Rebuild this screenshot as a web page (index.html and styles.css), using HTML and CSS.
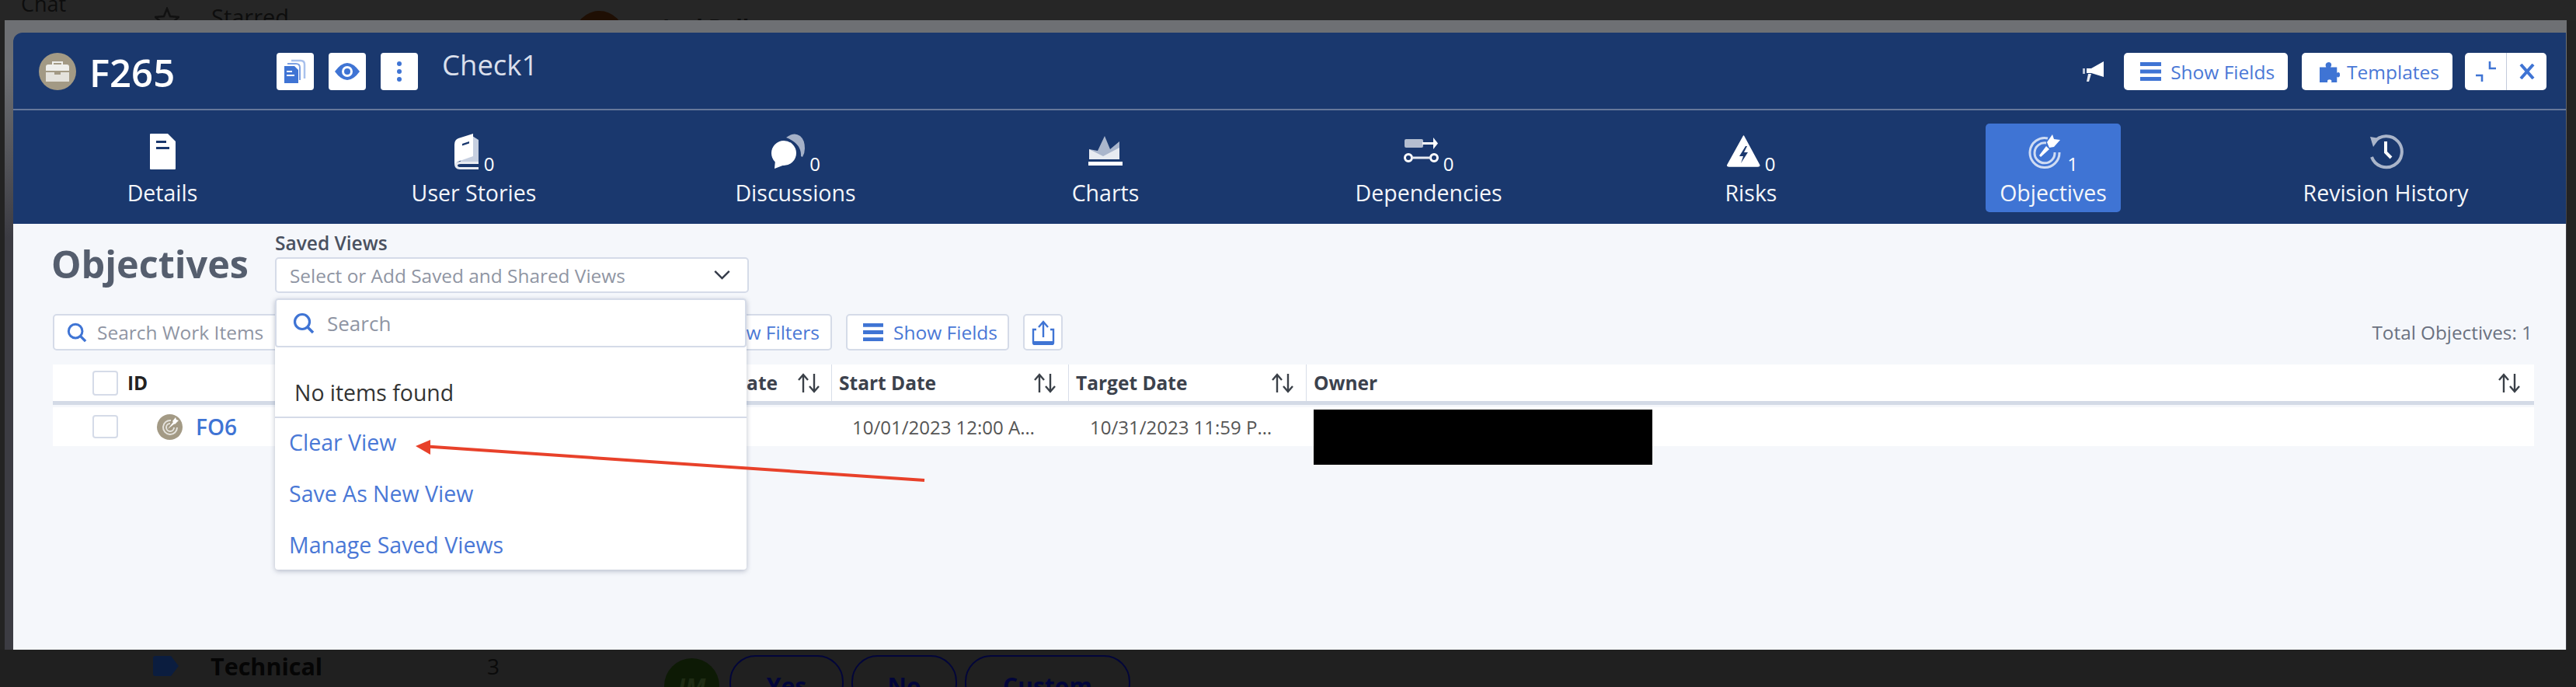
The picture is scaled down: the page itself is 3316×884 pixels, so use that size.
FILE: index.html
```html
<!DOCTYPE html>
<html lang="en">
<head>
    <meta charset="UTF-8">
    <title>F265 - Objectives</title>
    <link rel="stylesheet" href="styles.css">
</head>
<body>

<svg class="sprites" aria-hidden="true">
    <symbol id="sort" viewBox="0 0 30 26">
        <path d="M8 25V3M2 9l6-7 6 7M22 1v22M16 17l6 7 6-7" fill="none" stroke="currentColor" stroke-width="2.4"/>
    </symbol>
    <symbol id="search" viewBox="0 0 28 28">
        <circle cx="12" cy="12" r="9.5" fill="none" stroke="currentColor" stroke-width="3.2"/>
        <path d="M19 19l7 7" stroke="currentColor" stroke-width="3.6"/>
    </symbol>
    <symbol id="bars" viewBox="0 0 27 26">
        <path d="M0 1h27v5H0zM0 10.500h27v5H0zM0 20h27v5H0z" fill="currentColor"/>
    </symbol>
</svg>

<!-- page behind the modal, only its edges show -->
<div class="behind-top">
    <span class="bt-chat">Chat</span>
    <svg class="bt-star" viewBox="0 0 32 32"><path d="M16 2l4 10 11 1-8 7 2 11-9-6-9 6 2-11-8-7 11-1z" fill="none" stroke="#111" stroke-width="2.500"/></svg>
    <span class="bt-starred">Starred</span>
    <span class="bt-avatar"></span>
    <span class="bt-name">Joel Bell</span>
</div>

<div class="modal">
    <div class="card">

        <div class="header">
            <span class="avatar">
                <svg viewBox="0 0 48 48" width="48" height="48">
                    <path d="M18 15v-3h12v3" fill="none" stroke="#efefec" stroke-width="2"/>
                    <path d="M9 18q0-3 3-3h24q3 0 3 3v5H9z" fill="#efefec"/>
                    <path d="M9 25h11v3h8v-3h11v12H9z" fill="#e4e2dc"/>
                    <path d="M21 24h6v3h-6z" fill="#a39a85"/>
                </svg>
            </span>
            <span class="item-id">F265</span>
            <div class="icon-btns">
                <span class="icon-btn">
                    <svg viewBox="0 0 30 32" width="30" height="32">
                        <path d="M10 2h12q5 0 5 5v18" fill="none" stroke="#a9c1ec" stroke-width="2.500"/>
                        <path d="M5 6h11q5 0 5 5v16" fill="none" stroke="#7da1e3" stroke-width="2"/>
                        <path d="M1 9h13l5 5v17H1z" fill="#3f74d4"/>
                        <path d="M4 15h7v2H4zM4 20h10v2H4z" fill="#fff"/>
                    </svg>
                </span>
                <span class="icon-btn">
                    <svg viewBox="0 0 32 24" width="32" height="24">
                        <path d="M0 12Q8 1 16 1t16 11Q24 23 16 23T0 12z" fill="#3f74d4"/>
                        <circle cx="16" cy="12" r="7" fill="#fff"/>
                        <circle cx="16" cy="12" r="4" fill="#3f74d4"/>
                    </svg>
                </span>
                <span class="icon-btn">
                    <svg viewBox="0 0 8 28" width="8" height="28">
                        <circle cx="4" cy="4" r="3" fill="#3f74d4"/>
                        <circle cx="4" cy="14" r="3" fill="#3f74d4"/>
                        <circle cx="4" cy="24" r="3" fill="#3f74d4"/>
                    </svg>
                </span>
            </div>
            <span class="item-name">Check1</span>

            <div class="header-right">
                <svg class="horn" viewBox="0 0 29 26" width="29" height="26">
                    <path d="M27 0v20L11 15H5V9h6z" fill="#fff"/>
                    <path d="M0 9h3v7H0z" fill="#b9c3d6"/>
                    <path d="M7 16h4l-3 10H5z" fill="#e8ebf1"/>
                </svg>
                <span class="head-btn">
                    <svg class="ico-bars" width="27" height="26"><use href="#bars"/></svg>
                    Show Fields
                </span>
                <span class="head-btn">
                    <svg viewBox="0 0 28 36" width="26" height="34">
                        <path d="M0 12h9q-2-4 1-6 4-2 6 1 1 3-1 5h9v8q3-2 4 1 1 4-2 5-2 0-2-1v8h-8q2-3-2-4-4 0-3 4H0z" fill="#3f74d4"/>
                    </svg>
                    Templates
                </span>
                <div class="win-btns">
                    <span class="win-btn">
                        <svg viewBox="0 0 28 28" width="28" height="28">
                            <path d="M19 1v9h8M1 19h8v8" fill="none" stroke="#3f74d4" stroke-width="2.600"/>
                        </svg>
                    </span>
                    <span class="win-btn">
                        <svg viewBox="0 0 20 20" width="20" height="20">
                            <path d="M2 1l16 18M18 1L2 19" fill="none" stroke="#3f74d4" stroke-width="4"/>
                        </svg>
                    </span>
                </div>
            </div>
        </div>

        <div class="tabs">
            <div class="tab">
                <div class="tab-inner">
                    <div class="tab-icon">
                        <svg viewBox="0 0 33 46" width="33" height="46">
                            <path d="M1 0h22l10 10v35q0 1-1 1H1q-1 0-1-1V1q0-1 1-1z" fill="#fff"/>
                            <path d="M8 9h13v3H8zM8 17h17v3H8z" fill="#1a386e"/>
                        </svg>
                    </div>
                    <span class="tab-label">Details</span>
                </div>
            </div>
            <div class="tab">
                <div class="tab-inner">
                    <div class="tab-icon">
                        <svg viewBox="0 0 33 46" width="33" height="46">
                            <path d="M24 3l8 5v29H8z" fill="#c6cfe0"/>
                            <path d="M1 14q0-6 5-8L25 0v29L8 35q-7 2-7 7z" fill="#fff"/>
                            <path d="M1 38q0 8 7 8h24v-3H9q-4 0-4-2t4-2h23v-3H9q-6 0-8 2z" fill="#e8ebf1"/>
                            <path d="M11 13l9-3v2.500l-9 3z" fill="#1a386e"/>
                        </svg>
                    </div>
                    <span class="tab-count">0</span>
                    <span class="tab-label">User Stories</span>
                </div>
            </div>
            <div class="tab">
                <div class="tab-inner">
                    <div class="tab-icon">
                        <svg viewBox="0 0 44 46" width="44" height="46">
                            <path d="M20 5Q30-3 38 3q6 5 6 16 0 6-3 11l-2-1q1-16-19-24z" fill="#a5b1c8"/>
                            <circle cx="17" cy="25" r="16" fill="#fff"/>
                            <path d="M6 34l-1 11 13-5z" fill="#fff"/>
                        </svg>
                    </div>
                    <span class="tab-count">0</span>
                    <span class="tab-label">Discussions</span>
                </div>
            </div>
            <div class="tab">
                <div class="tab-inner">
                    <div class="tab-icon">
                        <svg viewBox="0 0 44 46" width="44" height="46">
                            <path d="M1 33V20l11 2 9-19 7 17 12-10v23z" fill="#aab6cc"/>
                            <path d="M1 20l18 9 21-11v15H1z" fill="#e8ebf1"/>
                            <path d="M0 36h44v5H0z" fill="#fff"/>
                        </svg>
                    </div>
                    <span class="tab-label">Charts</span>
                </div>
            </div>
            <div class="tab">
                <div class="tab-inner">
                    <div class="tab-icon">
                        <svg viewBox="0 0 45 46" width="45" height="46">
                            <rect x="1" y="7" width="24" height="11" rx="2" fill="#b4bed0"/>
                            <path d="M24 11h15v3H24z" fill="#fff"/>
                            <path d="M38 5l6 7.500-6 7.500z" fill="#fff"/>
                            <circle cx="6" cy="31" r="4.500" fill="none" stroke="#fff" stroke-width="3"/>
                            <circle cx="39" cy="31" r="4.500" fill="none" stroke="#fff" stroke-width="3"/>
                            <path d="M10 29.500h25v3H10z" fill="#e8ebf1"/>
                        </svg>
                    </div>
                    <span class="tab-count">0</span>
                    <span class="tab-label">Dependencies</span>
                </div>
            </div>
            <div class="tab">
                <div class="tab-inner">
                    <div class="tab-icon">
                        <svg viewBox="0 0 43 46" width="43" height="46">
                            <path d="M21.500 3l20 37q1 2-2 2H3q-3 0-2-2z" fill="#fff" stroke="#fff" stroke-width="1.500" stroke-linejoin="round"/>
                            <path d="M24 16l-8 13h5l-3 9 9-14h-5l4-8z" fill="#1a386e"/>
                        </svg>
                    </div>
                    <span class="tab-count">0</span>
                    <span class="tab-label">Risks</span>
                </div>
            </div>
            <div class="tab">
                <div class="tab-inner tab-active">
                    <div class="tab-icon">
                        <svg viewBox="0 0 44 46" width="44" height="46">
                            <g fill="none" stroke="#cfdcf3">
                                <path d="M25 6A19 19 0 1 0 40 24" stroke-width="3"/>
                                <path d="M23 12A13 13 0 1 0 34 24" stroke-width="3"/>
                            </g>
                            <path d="M14 28l9-12 4 4-11 10z" fill="#fff"/>
                            <path d="M24 11l7-10 2 6 8 1-8 9-6 1z" fill="#fff"/>
                        </svg>
                    </div>
                    <span class="tab-count">1</span>
                    <span class="tab-label">Objectives</span>
                </div>
            </div>
            <div class="tab">
                <div class="tab-inner">
                    <div class="tab-icon">
                        <svg viewBox="0 0 45 46" width="45" height="46">
                            <path d="M7 11A20 20 0 1 1 4 30" fill="none" stroke="#aab5ca" stroke-width="4"/>
                            <path d="M2 4l12 2-8 11z" fill="#aab5ca"/>
                            <path d="M22 10v14l7 7" fill="none" stroke="#fff" stroke-width="4"/>
                        </svg>
                    </div>
                    <span class="tab-label">Revision History</span>
                </div>
            </div>
        </div>

        <div class="panel">
            <div class="title-row">
                <h1 class="title">Objectives</h1>
                <div class="views">
                    <label class="views-label">Saved Views</label>
                    <div class="select">
                        <span>Select or Add Saved and Shared Views</span>
                        <svg viewBox="0 0 24 13" width="23" height="12">
                            <path d="M2 1l10 10L22 1" fill="none" stroke="#333a48" stroke-width="2.600"/>
                        </svg>
                    </div>
                    <div class="dropdown">
                        <div class="dd-search">
                            <svg class="ico-search" width="28" height="28"><use href="#search"/></svg>
                            <span>Search</span>
                        </div>
                        <div class="dd-empty">No items found</div>
                        <div class="dd-links">
                            <a class="dd-link">Clear View</a>
                            <a class="dd-link">Save As New View</a>
                            <a class="dd-link">Manage Saved Views</a>
                        </div>
                    </div>
                </div>
            </div>

            <div class="toolbar">
                <div class="search-box">
                    <svg class="ico-search" width="26" height="26"><use href="#search"/></svg>
                    <span>Search Work Items</span>
                </div>
                <span class="tool-btn filters-btn">Show Filters</span>
                <span class="tool-btn fields-btn">
                    <svg class="ico-bars" width="26" height="25"><use href="#bars"/></svg>
                    Show Fields
                </span>
                <span class="tool-btn share-btn">
                    <svg viewBox="0 0 30 32" width="30" height="32">
                        <path d="M6 12H2v17q0 2 2 2h22q2 0 2-2V12h-4" fill="none" stroke="#3f74d4" stroke-width="2.400"/>
                        <path d="M15 22V3M9 9l6-7 6 7" fill="none" stroke="#3f74d4" stroke-width="2.400"/>
                        <path d="M2 27h26v3H2z" fill="#3f74d4"/>
                    </svg>
                </span>
                <span class="total">Total Objectives: 1</span>
            </div>

            <div class="grid-head">
                <div class="th th-id">
                    <span class="check"></span>
                    <span>ID</span>
                </div>
                <div class="th th-hidden">
                    <span>Update Date</span>
                    <svg class="sort" width="30" height="26"><use href="#sort"/></svg>
                </div>
                <div class="th">
                    <span>Start Date</span>
                    <svg class="sort" width="30" height="26"><use href="#sort"/></svg>
                </div>
                <div class="th">
                    <span>Target Date</span>
                    <svg class="sort" width="30" height="26"><use href="#sort"/></svg>
                </div>
                <div class="th th-last">
                    <span>Owner</span>
                    <svg class="sort" width="30" height="26"><use href="#sort"/></svg>
                </div>
            </div>

            <div class="grid-row">
                <div class="td td-id">
                    <span class="check"></span>
                    <span class="row-icon">
                        <svg viewBox="0 0 33 33" width="33" height="33">
                            <g fill="none" stroke="#e4e2dc" stroke-width="2">
                                <path d="M18 8a9 9 0 1 0 8 9"/>
                                <path d="M17 12a5 5 0 1 0 5 5"/>
                            </g>
                            <path d="M14 19l7-9 2 2zM20 9l4-5 1 3 3 1-5 5z" fill="#fff"/>
                        </svg>
                    </span>
                    <a class="row-id">FO6</a>
                </div>
                <div class="td"></div>
                <div class="td td-date"><span>10/01/2023 12:00 AM</span></div>
                <div class="td td-date"><span>10/31/2023 11:59 PM</span></div>
                <div class="td td-owner"><span class="redact"></span></div>
            </div>

            <svg class="callout" viewBox="0 0 665 65" width="665" height="65">
                <path d="M20 15.500L660 59" stroke="#e8412a" stroke-width="4"/>
                <path d="M5 15L24 7v19z" fill="#e8412a"/>
            </svg>
        </div>

    </div>
</div>

<div class="behind-bottom">
    <svg class="bb-tag" viewBox="0 0 34 26"><path d="M3 0h20l10 13-10 13H3q-3 0-3-3V3q0-3 3-3z" fill="#0b1d3f"/></svg>
    <span class="bb-tech">Technical</span>
    <span class="bb-num">3</span>
    <span class="bb-circle">IM</span>
    <span class="bb-pill bb-yes">Yes</span>
    <span class="bb-pill bb-no">No</span>
    <span class="bb-pill bb-custom">Custom</span>
</div>

</body>
</html>
```

FILE: styles.css
```css
:root {
    --navy: #1a386e;
    --blue: #3f74d4;
    --link: #4a78d6;
    --line: #d5dbe8;
    --muted: #8f95a3;
    --panel: #f5f7fb;
}

* { margin: 0; padding: 0; box-sizing: border-box; }
body {
    width: 3316px;
    height: 884px;
    overflow: hidden;
    background: #232323;
    font-family: 'Open Sans', 'Noto Sans', sans-serif;
}

.sprites { display: none; }

/* --- page behind the modal --- */
.behind-top {
    height: 26px;
    display: flex;
    overflow: hidden;
    background: #262626;
    color: #0d0d0d;
}
.bt-chat { margin: -12px 0 0 27px; font-size: 27px; line-height: 34px; height: 34px; width: 172px; }
.bt-star { margin-top: 9px; width: 32px; height: 32px; flex: none; }
.bt-starred { margin: 2px 0 0 41px; font-size: 29px; line-height: 40px; height: 40px; width: 468px; }
.bt-avatar { margin-top: 14px; width: 63px; height: 63px; border-radius: 50%; background: #1f0f04; flex: none; }
.bt-name { margin: 15px 0 0 50px; font-size: 28px; font-weight: 700; line-height: 40px; height: 40px; }

.behind-bottom {
    height: 48px;
    display: flex;
    align-items: flex-start;
    overflow: hidden;
    background: #202020;
    color: #050505;
}
.bb-tag { margin: 8px 0 0 197px; width: 34px; height: 26px; flex: none; }
.bb-tech { margin: 0 0 0 40px; width: 356px; font-size: 30.500px; font-weight: 700; line-height: 42px; }
.bb-num { font-size: 28px; line-height: 42px; color: #0a0a0a; width: 228px; }
.bb-circle {
    margin-top: 11px;
    width: 71px;
    height: 71px;
    flex: none;
    border-radius: 50%;
    background: #0d1a05;
    color: #1f2c14;
    font-size: 30px;
    font-style: italic;
    font-weight: 700;
    text-align: center;
    line-height: 74px;
}
.bb-pill {
    height: 70px;
    margin-top: 7px;
    border: 2px solid #02053a;
    border-radius: 34px;
    color: #02053a;
    font-size: 30px;
    font-weight: 700;
    text-align: center;
    line-height: 76px;
}
.bb-yes { margin-left: 13px; width: 147px; }
.bb-no { margin-left: 10px; width: 136px; }
.bb-custom { margin-left: 10px; width: 213px; }

/* --- modal --- */
.modal {
    width: 3298px;
    height: 810px;
    margin-left: 6px;
    padding: 16px 1px 0 11px;
    background: linear-gradient(180deg, #6e7074 0, #6e7074 60px, #3c3c43 280px, #3c3c43 100%);
}
.card {
    height: 794px;
    display: flex;
    flex-direction: column;
    background: var(--navy);
    border-radius: 12px 0 0 0;
    position: relative;
}

/* header */
.header {
    height: 100px;
    flex: none;
    display: flex;
    align-items: flex-start;
    padding: 26px 25px 0 33px;
    border-bottom: 2px solid #66779a;
}
.avatar {
    width: 48px;
    height: 48px;
    border-radius: 50%;
    background: #a39a85;
    flex: none;
}
.item-id { margin-left: 17px; font-size: 49px; font-weight: 600; line-height: 50px; color: #fff; width: 108px; }
.icon-btns { margin-left: 133px; display: flex; gap: 19px; }
.icon-btn {
    width: 48px;
    height: 48px;
    background: #fff;
    border-radius: 4px;
    display: flex;
    align-items: center;
    justify-content: center;
}
.item-name { margin: -10px 0 0 31px; font-size: 36.500px; line-height: 50px; color: #d9dfeb; }

.header-right { margin-left: auto; display: flex; align-items: center; height: 48px; }
.horn { margin-right: 24px; }
.head-btn {
    height: 48px;
    background: #fff;
    border-radius: 5px;
    display: flex;
    align-items: center;
    gap: 12px;
    padding: 0 17px 0 21px;
    font-size: 24.500px;
    color: var(--link);
    margin-right: 18px;
}
.head-btn + .head-btn { padding: 0 17px 0 23px; gap: 9px; margin-right: 16px; }
.ico-bars, .ico-search { color: var(--blue); flex: none; }
.win-btns { display: flex; height: 48px; background: #fff; border-radius: 5px; }
.win-btn { width: 53px; display: flex; align-items: center; justify-content: center; }
.win-btn + .win-btn { width: 52px; border-left: 1px solid #c3cbdb; }

/* tabs */
.tabs {
    height: 146px;
    flex: none;
    display: grid;
    grid-template-columns: 384px 418px 410px 388px 444px 386px 392px 464px;
}
.tab { display: flex; justify-content: center; padding-top: 17px; }
.tab-inner {
    width: 260px;
    height: 114px;
    padding-top: 13px;
    border-radius: 5px;
    display: flex;
    flex-wrap: wrap;
    justify-content: center;
    align-items: flex-end;
    align-content: flex-start;
    column-gap: 6px;
    color: #fff;
}
.tab-active { width: 174px; background: var(--blue); }
.tab-icon { height: 46px; display: flex; }
.tab-count { font-size: 24px; line-height: 20px; margin-bottom: -3px; }
.tab-label { width: 100%; margin-top: 13px; text-align: center; font-size: 28.500px; line-height: 34px; color: #f4f6fa; }

/* panel */
.panel {
    flex: 1;
    position: relative;
    padding: 12px 41px 0 51px;
    background: var(--panel);
}
.title-row { display: flex; height: 77px; }
.title {
    width: 288px;
    flex: none;
    margin: 7px 0 0 -2px;
    font-size: 48.500px;
    font-weight: 700;
    line-height: 64px;
    color: #555e6e;
}
.views { width: 610px; position: relative; }
.views-label { display: block; font-size: 24.500px; font-weight: 600; line-height: 26px; color: #4a5160; }
.select {
    height: 46px;
    margin-top: 5px;
    padding: 0 21px 0 17px;
    background: #fff;
    border: 2px solid var(--line);
    border-radius: 5px;
    display: flex;
    align-items: center;
    justify-content: space-between;
    font-size: 24.400px;
    color: var(--muted);
}

.dropdown {
    position: absolute;
    top: 84px;
    left: 0;
    width: 607px;
    height: 349px;
    z-index: 5;
    background: #fff;
    border-radius: 4px;
    box-shadow: 0 2px 6px rgba(90, 100, 130, 0.4);
}
.dd-search {
    height: 63px;
    display: flex;
    align-items: center;
    gap: 16px;
    padding-left: 21px;
    border: 2px solid var(--line);
    border-radius: 4px;
    font-size: 26px;
    color: var(--muted);
}
.dd-empty {
    height: 91px;
    padding: 39px 0 0 25px;
    border-bottom: 2px solid var(--line);
    font-size: 28.400px;
    line-height: 38px;
    color: #333;
}
.dd-links { display: flex; flex-direction: column; padding: 12px 0 0 18px; gap: 27px; }
.dd-link { font-size: 28.500px; line-height: 39px; color: var(--link); }

/* toolbar */
.toolbar { display: flex; align-items: stretch; height: 47px; margin-top: 27px; padding-right: 2px; }
.search-box {
    width: 300px;
    background: #fff;
    border: 2px solid var(--line);
    border-radius: 5px;
    display: flex;
    align-items: center;
    gap: 13px;
    padding-left: 16px;
    font-size: 24.500px;
    color: var(--muted);
}
.tool-btn {
    background: #fff;
    border: 2px solid var(--line);
    border-radius: 5px;
    display: flex;
    align-items: center;
    font-size: 24.500px;
    color: var(--link);
}
.filters-btn { width: 220px; margin-left: 483px; justify-content: flex-end; padding-right: 14px; }
.fields-btn { width: 210px; margin-left: 18px; gap: 13px; padding-left: 20px; }
.share-btn { width: 51px; margin-left: 18px; justify-content: center; }
.total { margin-left: auto; align-self: center; font-size: 24.300px; color: #6a7180; }

/* table */
.grid-head, .grid-row {
    display: grid;
    grid-template-columns: 652px 350px 305px 306px 1581px;
    background: #fff;
}
.grid-head { height: 52px; margin-top: 18px; border-bottom: 5px solid #d3dae6; }
.grid-row { height: 50px; margin-top: 3px; }
.th {
    display: flex;
    align-items: center;
    justify-content: space-between;
    padding: 0 15px 0 9px;
    font-size: 24.500px;
    font-weight: 700;
    color: #3c424d;
    border-left: 1px solid #d8dee9;
}
.th-id { border-left: 0; justify-content: flex-start; gap: 12px; padding-left: 51px; color: #222; }
.th-hidden { justify-content: flex-end; gap: 25px; padding-right: 14px; border-left: 0; }
.th-last { padding-right: 17px; }
.sort { color: #3a4048; flex: none; }
.check {
    width: 33px;
    height: 32px;
    flex: none;
    background: #fff;
    border: 2px solid var(--line);
    border-radius: 4px;
}
.td { display: flex; align-items: center; min-width: 0; font-size: 24px; color: #555; }
.td-id { padding-left: 51px; }
.td-id .check { height: 30px; }
.row-icon {
    margin-left: 50px;
    width: 33px;
    height: 33px;
    flex: none;
    border-radius: 50%;
    background: #a39a85;
}
.row-id { margin-left: 17px; font-size: 28px; font-weight: 600; color: var(--blue); }
.td-date { padding: 0 41px 0 27px; }
.td-date + .td-date { padding-left: 28px; }
.td-date span { overflow: hidden; white-space: nowrap; text-overflow: ellipsis; }
.td-owner { position: relative; }
.redact { position: absolute; left: 10px; top: 3px; width: 436px; height: 71px; background: #000; }

.callout { position: absolute; left: 513px; top: 271px; z-index: 6; }
```
